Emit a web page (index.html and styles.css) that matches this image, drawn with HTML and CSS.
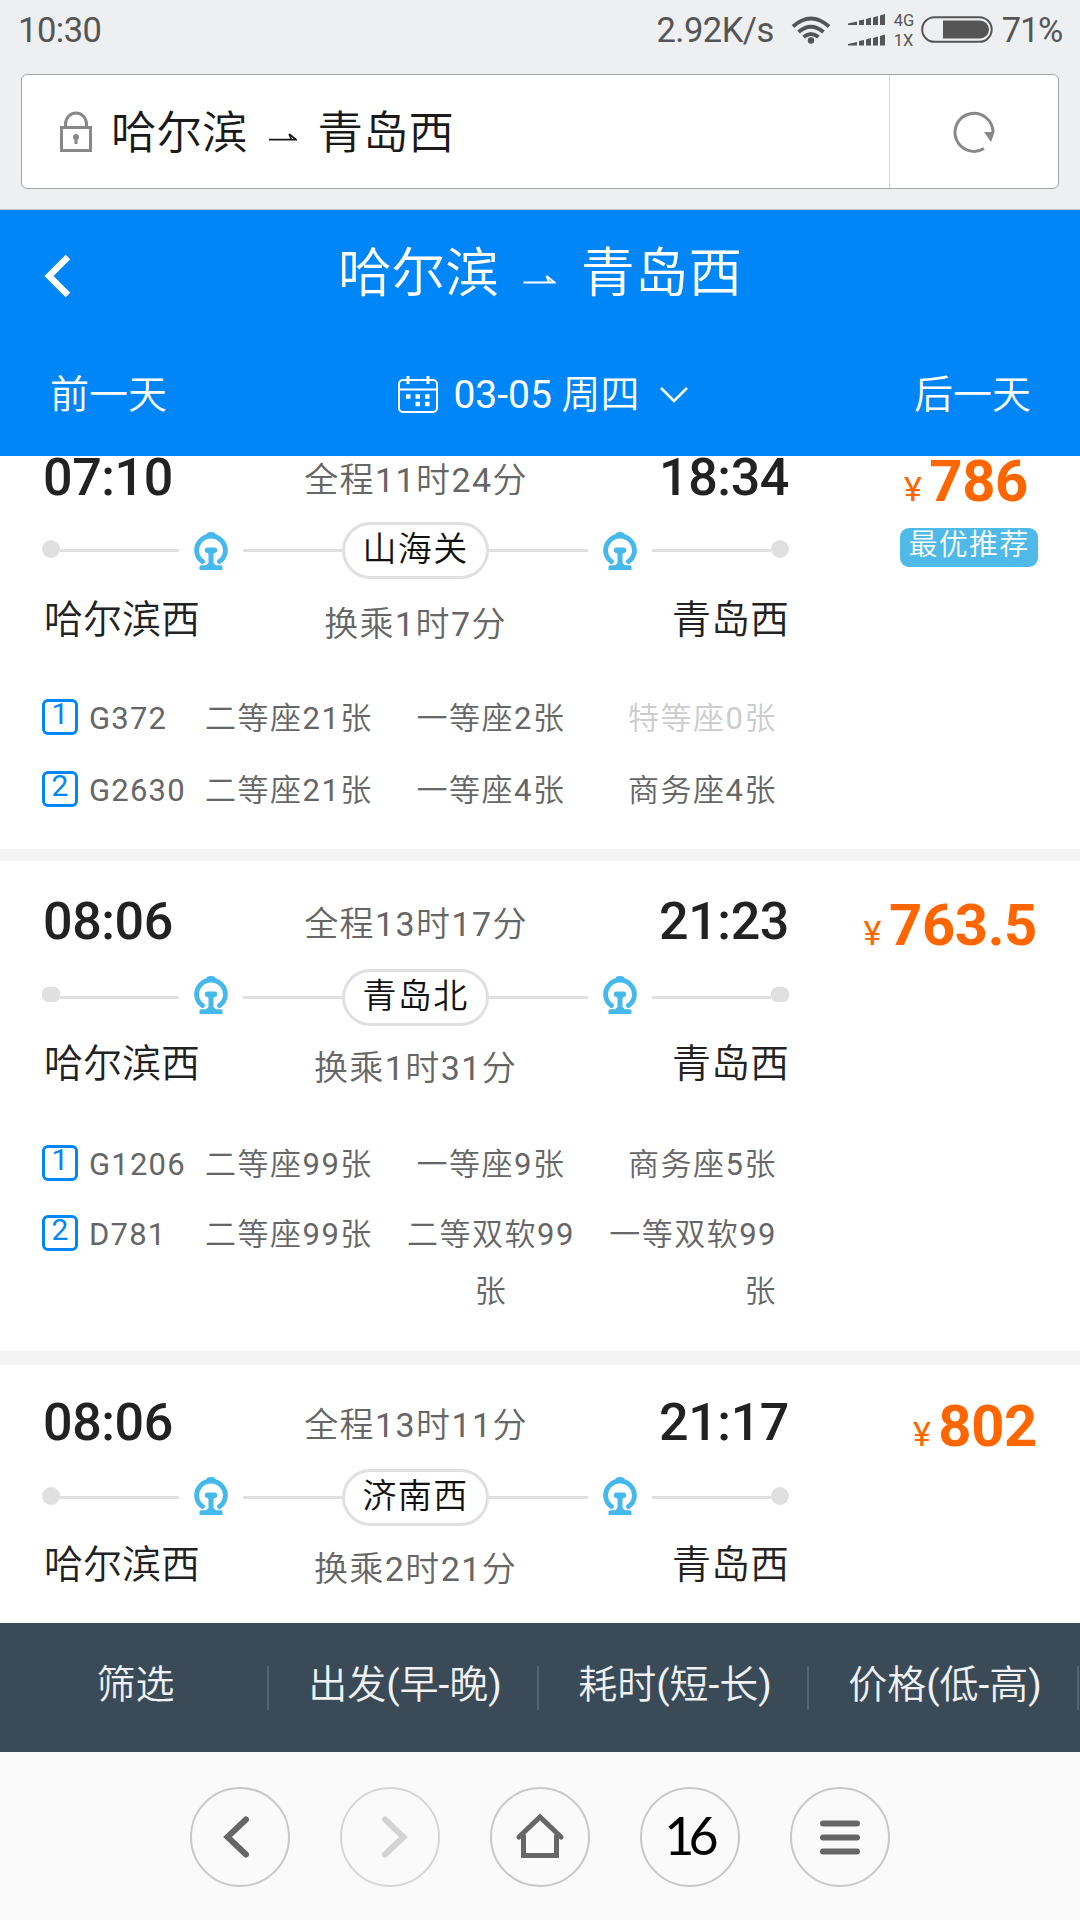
FILE: index.html
```html
<!DOCTYPE html>
<html lang="zh-CN">
<head>
<meta charset="utf-8">
<title>哈尔滨 ⇀ 青岛西</title>
<link rel="stylesheet" href="styles.css">
</head>
<body>
<svg class="defs" width="0" height="0" aria-hidden="true">
  <symbol id="rail" viewBox="0 0 34 38">
    <path d="M8.500 29.500A14.400 14 0 1 1 25.500 29.500" fill="none" stroke="currentColor" stroke-width="4.800" stroke-linecap="round"/>
    <path d="M12 3.500C12 1 14 0 17 0s5 1 5 3.500zM13.500 15.500h7a2.700 2.700 0 0 1 0 5.400l-1 1v9l2.500 2.300H27a1.500 1.500 0 0 1 1.500 1.500V38h-23v-3.300A1.500 1.500 0 0 1 7 33.200h5l2.500-2.300v-9l-1-1a2.700 2.700 0 0 1 0-5.400z" fill="currentColor"/>
  </symbol>
</svg>
<div class="phone">
  <div class="status">
    <span class="clock">10:30</span>
    <span class="speed">2.92K/s</span>
    <svg class="wifi" width="40" height="30" viewBox="0 0 40 30" fill="none" stroke="#555" stroke-width="4">
      <path d="M2 11.500Q20-4.500 38 11.500M7.500 17Q20 6.500 32.500 17M12.500 22Q20 16 27.500 22"/>
      <circle cx="20" cy="25.500" r="3.200" fill="#555" stroke="none"/>
    </svg>
    <svg class="signal" width="38" height="32" viewBox="0 0 38 32" fill="#555">
      <path d="M0 9.500l9-2v3.500H0zM11 6.500l5-1v5.500h-5zM18 5l5-1.500V11h-5zM25 3.500l5-1.500v9h-5zM32 1.500L37 0v11h-5z"/>
      <path d="M0 30l9-2v3.500H0zM11 27l5-1v5.500h-5zM18 25.500l5-1.500v7.500h-5zM25 24l5-1.500v9h-5zM32 22l5-1.500v11h-5z"/>
    </svg>
    <span class="net"><span>4G</span><span>1X</span></span>
    <svg class="battery" width="72" height="28" viewBox="0 0 72 28">
      <rect x="1.200" y="1.200" width="69.500" height="24.600" rx="12.300" fill="none" stroke="#555" stroke-width="2"/>
      <path d="M22 4.500h37a9 9 0 0 1 0 18H22z" fill="#555"/>
    </svg>
    <span class="percent">71%</span>
  </div>
  <div class="address-wrap">
    <div class="address">
      <svg class="lock" width="32" height="42" viewBox="0 0 32 42" fill="none" stroke="#888" stroke-width="3">
        <path d="M5.500 16V13a10.500 11 0 0 1 21 0v3"/><rect x="1.500" y="16.500" width="29" height="23"/>
        <circle cx="16" cy="26" r="3" fill="#888" stroke="none"/><path d="M16 26v7"/>
      </svg>
      <span class="url">哈尔滨<svg class="harpoon" viewBox="0 0 32 10"><path d="M0 7.500h31L23 1M23 1l2.500 6" fill="none" stroke="currentColor" stroke-width="2"/></svg>青岛西</span>
      <span class="reload">
        <svg width="42" height="42" viewBox="0 0 42 42">
          <path d="M31 37.500A19 19 0 1 1 40 21" fill="none" stroke="#888" stroke-width="3"/>
          <path d="M31 21h10.500L38 31z" fill="#888"/>
        </svg>
      </span>
    </div>
  </div>
  <header class="header">
    <div class="title-row">
      <svg class="back" width="28" height="44" viewBox="0 0 28 44"><path d="M24 3L5 22l19 19" fill="none" stroke="#fff" stroke-width="6.500"/></svg>
      <h1 class="title">哈尔滨<svg class="harpoon" viewBox="0 0 32 10"><path d="M0 7.500h31L23 1M23 1l2.500 6" fill="none" stroke="currentColor" stroke-width="2"/></svg>青岛西</h1>
    </div>
    <div class="date-row">
      <span>前一天</span>
      <span class="date">
        <svg width="40" height="38" viewBox="0 0 40 38" fill="none" stroke="#fff" stroke-width="2">
          <rect x="1" y="4" width="38" height="32" rx="4"/><path d="M1 13.500h38"/><path d="M10 0v8M30 0v8" stroke-width="3"/>
          <path d="M8 20.500h4.500M17.500 20.500H22M27 20.500h4.500M17.500 28H22M27 28h4.500" stroke-width="4.500"/>
        </svg>
        <span class="date-text">03-05 周四</span>
        <svg class="down" width="28" height="18" viewBox="0 0 28 18"><path d="M1 2l13 13L27 2" fill="none" stroke="#fff" stroke-width="2.600"/></svg>
      </span>
      <span>后一天</span>
    </div>
  </header>
  <main class="list">
    <section class="card first">
      <div class="trip">
        <div class="times"><b>07:10</b><span>全程11时24分</span><b>18:34</b></div>
        <div class="route"><i class="dot"></i><i class="line"></i><svg class="rail"><use href="#rail"/></svg><i class="line mid"></i><span class="pill">山海关</span><i class="line mid"></i><svg class="rail"><use href="#rail"/></svg><i class="line"></i><i class="dot"></i></div>
        <div class="stations"><span>哈尔滨西</span><em>换乘1时7分</em><span>青岛西</span></div>
        <div class="seats"><i class="num">1</i><span>G372</span><span>二等座21张</span><span>一等座2张</span><span class="none">特等座0张</span></div>
        <div class="seats"><i class="num">2</i><span>G2630</span><span>二等座21张</span><span>一等座4张</span><span>商务座4张</span></div>
      </div>
      <div class="fare"><div class="price"><small>¥</small>786</div><span class="tag">最优推荐</span></div>
    </section>
    <section class="card second">
      <div class="trip">
        <div class="times"><b>08:06</b><span>全程13时17分</span><b>21:23</b></div>
        <div class="route"><i class="dot"></i><i class="line"></i><svg class="rail"><use href="#rail"/></svg><i class="line mid"></i><span class="pill">青岛北</span><i class="line mid"></i><svg class="rail"><use href="#rail"/></svg><i class="line"></i><i class="dot"></i></div>
        <div class="stations"><span>哈尔滨西</span><em>换乘1时31分</em><span>青岛西</span></div>
        <div class="seats"><i class="num">1</i><span>G1206</span><span>二等座99张</span><span>一等座9张</span><span>商务座5张</span></div>
        <div class="seats"><i class="num">2</i><span>D781</span><span>二等座99张</span><span>二等双软99<br>张</span><span>一等双软99<br>张</span></div>
      </div>
      <div class="fare"><div class="price"><small>¥</small>763.5</div></div>
    </section>
    <section class="card third">
      <div class="trip">
        <div class="times"><b>08:06</b><span>全程13时11分</span><b>21:17</b></div>
        <div class="route"><i class="dot"></i><i class="line"></i><svg class="rail"><use href="#rail"/></svg><i class="line mid"></i><span class="pill">济南西</span><i class="line mid"></i><svg class="rail"><use href="#rail"/></svg><i class="line"></i><i class="dot"></i></div>
        <div class="stations"><span>哈尔滨西</span><em>换乘2时21分</em><span>青岛西</span></div>
      </div>
      <div class="fare"><div class="price"><small>¥</small>802</div></div>
    </section>
  </main>
  <nav class="sort"><span>筛选</span><span>出发(早-晚)</span><span>耗时(短-长)</span><span>价格(低-高)</span></nav>
  <nav class="browser">
    <span class="btn"><svg viewBox="0 0 100 100"><path d="M56 32.500L37.500 50 56 67.500"/></svg></span>
    <span class="btn off"><svg viewBox="0 0 100 100"><path d="M45 32.500L63.500 50 45 67.500"/></svg></span>
    <span class="btn"><svg viewBox="0 0 100 100"><path class="thin" d="M29 50L50 30l21 20M33.500 49v19.500h33V49"/></svg></span>
    <span class="btn count">16</span>
    <span class="btn"><svg viewBox="0 0 100 100"><path d="M33 36.500h34M33 50.500h34M33 64.500h34"/></svg></span>
  </nav>
</div>
</body>
</html>
```
FILE: styles.css
```css
* { box-sizing: border-box; }
body { margin: 0; background: #fff; font-family: Roboto, "Noto Sans CJK SC DemiLight", "Noto Sans CJK SC Light", "Noto Sans CJK SC", sans-serif; font-weight: 400; color: #222; }
i, em { font-style: normal; }
svg { display: block; flex: none; }
.defs { position: absolute; }
.phone { width: 1080px; height: 1920px; display: flex; flex-direction: column; overflow: hidden; }
.phone > * { flex: none; }

.status { height: 74px; padding: 9px 18px 0 18px; background: #edeff1; display: flex; align-items: flex-start; color: #555; font-size: 34.500px; line-height: 42px; }
.clock { letter-spacing: -0.5px; }
.speed { margin-left: auto; letter-spacing: -0.5px; }
.wifi { margin: 6px 0 0 17px; }
.signal { margin: 5px 0 0 17px; }
.net { display: flex; flex-direction: column; width: 27px; margin: 2px 0 0 8px; font-size: 16.500px; line-height: 20px; }
.battery { margin: 7px 0 0 0; }
.percent { margin-left: 9px; letter-spacing: -1.300px; }

.address-wrap { height: 136px; padding: 0 21px; background: #edeff1; border-bottom: 1px solid #b7c3cc; }
.address { height: 115px; background: #fff; border: 1px solid #a2a5a7; border-radius: 6px; display: flex; align-items: center; }
.lock { margin: 0 0 0 38px; }
.url { display: flex; align-items: center; margin: 0 0 5px 19px; font-size: 45.500px; line-height: 60px; color: #1a1a1a; font-family: "Noto Sans CJK SC", sans-serif; font-weight: 350; }
.url .harpoon { width: 28px; height: 9px; margin: 17px 21px 0 21px; }
.reload { width: 169px; height: 100%; margin-left: auto; border-left: 1px solid #d8dadc; display: flex; align-items: center; justify-content: center; }

.header { height: 246px; background: #0086f6; color: #fff; display: flex; flex-direction: column; }
.title-row { height: 129px; padding: 0 44px; display: flex; align-items: center; }
.back { margin-top: 3px; }
.title { flex: 1; margin: 0 28px 12px 0; display: flex; align-items: center; justify-content: center; font-size: 53.700px; line-height: 70px; font-weight: 350; font-family: "Noto Sans CJK SC", sans-serif; }
.title .harpoon { width: 33px; height: 10px; margin: 22px 25px 0 24px; }
.date-row { padding: 27px 49px 0 50px; display: flex; justify-content: space-between; align-items: center; font-size: 39px; line-height: 58px; }
.date { display: flex; align-items: center; margin-left: 5px; }
.date-text { margin-left: 15px; }
.down { margin-left: 20px; }

.list { height: 1167px; background: #fff; }
.card { display: flex; padding-left: 42px; }
.first { height: 393px; }
.first .trip { margin-top: -1px; }
.second { border-top: 12px solid #f4f4f4; border-bottom: 14px solid #f4f4f4; padding-top: 38px; height: 516px; }
.third { padding-top: 35px; }
.trip { width: 747px; }
.times { height: 59px; display: flex; justify-content: space-between; align-items: baseline; padding: 0 0 0 1px; line-height: 46px; }
.times b { font-size: 52px; font-weight: 500; letter-spacing: -0.4px; }
.times span, .stations em { position: relative; top: -3px; font-size: 34px; letter-spacing: 1.400px; color: #666; }
.stations em { top: 3px; right: 1px; }
.route { height: 74px; display: flex; align-items: center; }
.dot { width: 18px; height: 18px; border-radius: 50%; background: #e0e0e0; margin-bottom: 3px; }
.line { flex: 1; height: 3px; background: #e0e0e0; }
.mid { flex: none; width: 99px; }
.rail { width: 34px; height: 38px; margin: 0 15px; color: #45b8ec; }
.first .route { padding-bottom: 1px; }
.first .rail { margin-top: 1px; }
.second .route { padding-top: 4px; }
.second .rail { margin-top: -5px; }
.second .dot { height: 15px; border-radius: 6px; margin-bottom: 6px; }
.third .route { padding-top: 3px; }
.third .rail { margin-top: -3px; }
.pill { width: 147px; height: 57px; border: 3px solid #e0e0e0; border-radius: 29px; display: flex; justify-content: center; font-size: 34px; line-height: 49px; letter-spacing: 1.400px; color: #111; }
.stations { height: 102px; display: grid; grid-template-columns: 1fr auto 1fr; align-items: baseline; padding: 4px 0 0 2px; font-size: 39px; line-height: 56px; }
.stations span:last-child { text-align: right; }
.second .stations { height: 104px; }
.seats { display: grid; grid-template-columns: 47px 116px 182px 208px 1fr; min-height: 72px; font-size: 31px; letter-spacing: 1.500px; line-height: 57px; color: #666; }
.second .seats { min-height: 70px; }
.seats span:nth-child(2) { letter-spacing: 1.200px; }
.seats span:nth-child(4) { text-align: center; }
.seats span:nth-child(5) { text-align: right; padding-right: 12px; white-space: nowrap; }
.seats .none { color: #ccc; }
.num { width: 36px; height: 36px; margin-top: 9px; border: 3px solid #0086f6; border-radius: 6px; color: #0086f6; font-size: 30px; line-height: 23px; text-align: center; letter-spacing: 0; }
.fare { flex: 1; margin-top: -3px; padding-right: 43px; display: flex; flex-direction: column; align-items: flex-end; }
.price { display: flex; align-items: baseline; color: #ff6600; font-size: 58px; line-height: 58px; font-weight: 700; letter-spacing: -0.4px; }
.price small { font-size: 34px; font-weight: 400; margin-right: 8px; }
.first .price { padding-right: 10px; }
.first .fare { margin-top: -4px; padding-right: 42px; }
.tag { width: 138px; height: 39px; margin-top: 10px; border-radius: 9px; background: #4fb9e7; color: #fff; font-size: 29px; line-height: 35px; letter-spacing: 1.200px; text-align: center; }

.sort { height: 129px; background: #3b4a57; color: #eef2f5; display: flex; align-items: center; font-size: 39px; }
.sort span { width: 270px; height: 44px; padding: 0 0 13px 4px; border-right: 2px solid #55636f; display: flex; align-items: center; justify-content: center; }
.sort span:first-child { width: 269px; }
.browser { height: 168px; padding-top: 2px; background: #fafafa; display: flex; justify-content: center; align-items: center; gap: 50px; }
.btn { width: 100px; height: 100px; border: 2px solid #c8c8c8; border-radius: 50%; display: flex; align-items: center; justify-content: center; color: #000; }
.btn svg { width: 100px; height: 100px; fill: none; stroke: #666; stroke-width: 6; stroke-linecap: round; }
.btn .thin { stroke-width: 5; }
.off { border-color: #d6d6d6; }
.off svg { stroke: #d3d3d3; }
.count { padding: 0 3px 5px 0; font-family: Lato, sans-serif; font-size: 52px; font-weight: 400; letter-spacing: -6px; }
```
